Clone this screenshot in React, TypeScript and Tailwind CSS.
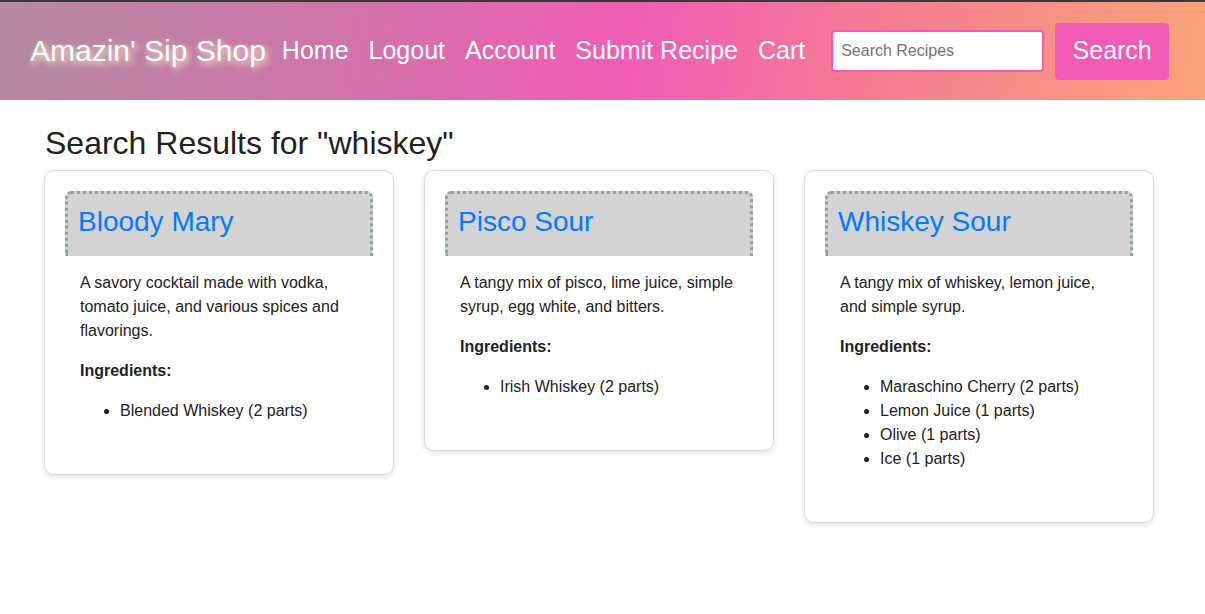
import React from 'react';

interface Ingredient {
  name: string;
  parts: number;
}

interface Recipe {
  id: number;
  name: string;
  description: string;
  ingredients: Ingredient[];
}

const recipes: Recipe[] = [
  {
    id: 1,
    name: 'Bloody Mary',
    description: 'A savory cocktail made with vodka, tomato juice, and various spices and flavorings.',
    ingredients: [{ name: 'Blended Whiskey', parts: 2 }],
  },
  {
    id: 2,
    name: 'Pisco Sour',
    description: 'A tangy mix of pisco, lime juice, simple syrup, egg white, and bitters.',
    ingredients: [{ name: 'Irish Whiskey', parts: 2 }],
  },
  {
    id: 3,
    name: 'Whiskey Sour',
    description: 'A tangy mix of whiskey, lemon juice, and simple syrup.',
    ingredients: [
      { name: 'Maraschino Cherry', parts: 2 },
      { name: 'Lemon Juice', parts: 1 },
      { name: 'Olive', parts: 1 },
      { name: 'Ice', parts: 1 },
    ],
  },
];

const navLinks = ['Home', 'Logout', 'Account', 'Submit Recipe', 'Cart'];

const RecipeCard: React.FC<{ recipe: Recipe }> = ({ recipe }) => (
  <div className="w-[350px] bg-white border border-[#dddddd] rounded-[10px] shadow-[0_2px_6px_rgba(0,0,0,0.12)] p-5">
    {/* Card title block */}
    <div className="h-[65px] bg-[#d3d3d3] border-[3px] border-b-0 border-dotted border-[#8aa598] rounded-t-[6px] pl-[10px] flex items-center">
      <a href="#" className="text-[28px] leading-none text-[#007bff] -mt-[7px]">
        {recipe.name}
      </a>
    </div>
    <div className="p-[15px] text-[16px] leading-6 text-[#222222]">
      <p className="mb-4">{recipe.description}</p>
      <p className="font-bold mb-4">Ingredients:</p>
      <ul className="list-disc pl-10 mb-4">
        {recipe.ingredients.map((ing) => (
          <li key={ing.name}>
            {ing.name} ({ing.parts} parts)
          </li>
        ))}
      </ul>
    </div>
  </div>
);

export default function App() {
  return (
    <div className="min-h-screen bg-white font-['Liberation_Sans',Arial,sans-serif]">
      {/* Header */}
      <header className="h-[100px] border-t-2 border-[#3a3a3a] bg-[linear-gradient(100deg,#b48a9f_0%,#cf75a9_28%,#f15cb5_52%,#f6808f_75%,#faa47a_100%)] flex items-center pl-[30px] pr-[37px]">
        <h1 className="text-[30px] text-white [text-shadow:2px_3px_6px_#fff6cc] whitespace-nowrap -mt-0.5">
          Amazin' Sip Shop
        </h1>
        <nav className="flex items-center gap-5 ml-4">
          {navLinks.map((link) => (
            <a key={link} href="#" className="text-[25px] text-white whitespace-nowrap">
              {link}
            </a>
          ))}
        </nav>
        <form className="flex items-center ml-[26px] gap-[11px]" onSubmit={(e) => e.preventDefault()}>
          <input
            type="text"
            placeholder="Search Recipes"
            className="w-[213px] h-[42px] bg-white border-2 border-[#f05bb5] rounded-[4px] px-2 text-[16px] text-[#333] placeholder:text-[#757575] outline-none"
          />
          <button
            type="submit"
            className="h-[57px] w-[114px] bg-[#f05bb5] rounded-[4px] text-white text-[25px]"
          >
            Search
          </button>
        </form>
      </header>

      {/* Results */}
      <main className="pl-[44px] pr-[45px]">
        <h2 className="text-[32px] text-[#222222] mt-[19px] mb-[3px] ml-px">Search Results for "whiskey"</h2>
        <div className="flex items-start gap-[30px]">
          {recipes.map((r) => (
            <RecipeCard key={r.id} recipe={r} />
          ))}
        </div>
      </main>
    </div>
  );
}
